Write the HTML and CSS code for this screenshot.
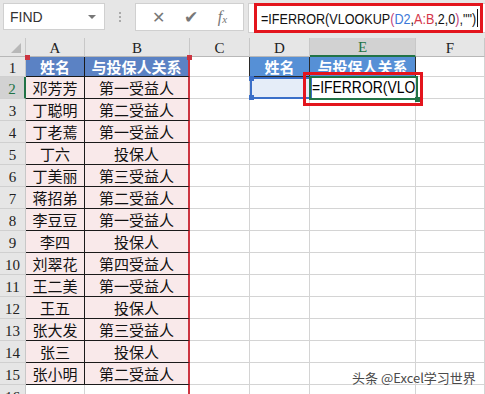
FILE: index.html
```html
<!DOCTYPE html>
<html lang="zh-CN">
<head>
    <meta charset="UTF-8">
    <title>VLOOKUP IFERROR</title>
    <link rel="stylesheet" href="styles.css">
</head>
<body>
    <div class="toolbar">
        <div class="namebox"><span>FIND</span><span class="caret"></span></div>
        <div class="grip"><i></i><i></i><i></i></div>
        <div class="buttons">
            <span class="btn">&#x2715;</span>
            <span class="btn check">&#x2714;</span>
            <span class="btn fx">f<sub>x</sub></span>
        </div>
        <div class="formula">
            <div class="formula-text"><span class="narrow">=IFERROR(VLOOKUP<span class="paren">(</span><span class="ref-d">D2</span>,<span class="ref-a">A:B</span>,2,0<span class="paren">)</span>,"")</span><span class="cursor"></span></div>
        </div>
    </div>

    <div class="sheet">
        <div class="grid">
            <div class="ch corner"><span class="tri"></span></div>
            <div class="ch">A</div><div class="ch">B</div><div class="ch">C</div><div class="ch">D</div><div class="ch active">E</div><div class="ch">F</div>

            <div class="rh">1</div><div class="c th">姓名</div><div class="c th b">与投保人关系</div><div class="c"></div><div class="c th2">姓名</div><div class="c th2">与投保人关系</div><div class="c"></div>
            <div class="rh active">2</div><div class="c t">邓芳芳</div><div class="c t b">第一受益人</div><div class="c"></div><div class="c ref"></div><div class="c edit"><span class="narrow">=IFERROR(VLOOKUP(D2,A:B,2,0),"")</span></div><div class="c"></div>
            <div class="rh">3</div><div class="c t">丁聪明</div><div class="c t b">第二受益人</div><div class="c"></div><div class="c"></div><div class="c"></div><div class="c"></div>
            <div class="rh">4</div><div class="c t">丁老蔫</div><div class="c t b">第一受益人</div><div class="c"></div><div class="c"></div><div class="c"></div><div class="c"></div>
            <div class="rh">5</div><div class="c t">丁六</div><div class="c t b">投保人</div><div class="c"></div><div class="c"></div><div class="c"></div><div class="c"></div>
            <div class="rh">6</div><div class="c t">丁美丽</div><div class="c t b">第三受益人</div><div class="c"></div><div class="c"></div><div class="c"></div><div class="c"></div>
            <div class="rh">7</div><div class="c t">蒋招弟</div><div class="c t b">第二受益人</div><div class="c"></div><div class="c"></div><div class="c"></div><div class="c"></div>
            <div class="rh">8</div><div class="c t">李豆豆</div><div class="c t b">第一受益人</div><div class="c"></div><div class="c"></div><div class="c"></div><div class="c"></div>
            <div class="rh">9</div><div class="c t">李四</div><div class="c t b">投保人</div><div class="c"></div><div class="c"></div><div class="c"></div><div class="c"></div>
            <div class="rh">10</div><div class="c t">刘翠花</div><div class="c t b">第四受益人</div><div class="c"></div><div class="c"></div><div class="c"></div><div class="c"></div>
            <div class="rh">11</div><div class="c t">王二美</div><div class="c t b">第一受益人</div><div class="c"></div><div class="c"></div><div class="c"></div><div class="c"></div>
            <div class="rh">12</div><div class="c t">王五</div><div class="c t b">投保人</div><div class="c"></div><div class="c"></div><div class="c"></div><div class="c"></div>
            <div class="rh">13</div><div class="c t">张大发</div><div class="c t b">第三受益人</div><div class="c"></div><div class="c"></div><div class="c"></div><div class="c"></div>
            <div class="rh">14</div><div class="c t">张三</div><div class="c t b">投保人</div><div class="c"></div><div class="c"></div><div class="c"></div><div class="c"></div>
            <div class="rh">15</div><div class="c t">张小明</div><div class="c t b">第二受益人</div><div class="c"></div><div class="c"></div><div class="c"></div><div class="c"></div>
            <div class="rh">16</div><div class="c"></div><div class="c b-only"></div><div class="c"></div><div class="c"></div><div class="c"></div><div class="c"></div>
        </div>

        <!-- range handles and annotation boxes drawn over the grid -->
        <span class="handle red h-a"></span>
        <span class="handle red h-b"></span>
        <div class="ref-box"><span class="handle blue tl"></span><span class="handle blue bl"></span></div>
        <div class="active-box"><span class="handle green br"></span></div>
        <div class="mark-box"></div>
        <div class="watermark">头条 @Excel学习世界</div>
    </div>
</body>
</html>
```

FILE: styles.css
```css
body {
    margin: 0;
    width: 485px;
    height: 394px;
    overflow: hidden;
    background: #e6e6e6;
    font-family: "Liberation Sans", Arial, sans-serif;
}

/* formula bar */
.toolbar {
    height: 38px;
    display: flex;
    align-items: flex-start;
    padding: 3px 0 0 3px;
    box-sizing: border-box;
}
.namebox {
    width: 102px;
    height: 27px;
    background: #fff;
    border: 1px solid #d0d0d0;
    box-sizing: border-box;
    display: flex;
    align-items: center;
    justify-content: space-between;
    padding: 0 8px 0 6px;
    font-size: 14px;
    color: #333;
}
.caret {
    width: 0;
    height: 0;
    border-left: 4px solid transparent;
    border-right: 4px solid transparent;
    border-top: 4px solid #777;
}
.grip {
    width: 30px;
    height: 27px;
    display: flex;
    flex-direction: column;
    align-items: center;
    justify-content: center;
    gap: 2px;
}
.grip i {
    width: 2px;
    height: 2px;
    background: #aaa;
}
.buttons {
    width: 109px;
    height: 28px;
    background: #fff;
    border: 1px solid #d0d0d0;
    box-sizing: border-box;
    display: flex;
    align-items: center;
    justify-content: space-around;
    padding: 0 6px;
    color: #777;
    font-size: 16px;
}
.btn.check {
    font-size: 17px;
}
.btn.fx {
    font-family: "Liberation Serif", serif;
    font-style: italic;
    font-size: 16px;
}
.btn.fx sub {
    font-size: 11px;
    vertical-align: -1px;
}
.formula {
    margin-left: 4px;
    flex: 1;
    height: 30px;
    background: #fff;
    border: 1px solid #d0d0d0;
    border-right: none;
    box-sizing: border-box;
    padding-left: 5px;
}
.formula-text {
    display: flex;
    align-items: center;
    width: 229px;
    height: 30px;
    margin-top: -1px;
    border: 3px solid #e3151d;
    box-sizing: border-box;
    padding-left: 4px;
    font-size: 15px;
    color: #111;
    white-space: pre;
    overflow: hidden;
}
.narrow {
    display: inline-block;
    transform: scaleX(0.84);
    transform-origin: left center;
}
.formula-text .narrow {
    width: 214px;
    flex: none;
}
.paren { color: #c0407a; }
.ref-d { color: #3b78d8; }
.ref-a { color: #d4364a; }
.cursor {
    flex: none;
    width: 1px;
    height: 18px;
    background: #111;
    margin-left: 2px;
}

/* sheet */
.sheet {
    position: relative;
}
.grid {
    display: grid;
    grid-template-columns: 26px 59px 105px 60px 60px 106px 69px;
    grid-template-rows: 19px 20px repeat(15, 22px);
    background: #fff;
}
.grid > div {
    box-sizing: border-box;
    display: flex;
    align-items: center;
    justify-content: center;
    overflow: hidden;
    white-space: nowrap;
}
.ch {
    background: #e6e6e6;
    border-right: 1px solid #c8c8c8;
    border-bottom: 1px solid #b8b8b8;
    font-family: "Liberation Serif", serif;
    font-size: 15px;
    color: #222;
    padding-top: 2px;
}
.ch.corner {
    position: relative;
}
.tri {
    position: absolute;
    right: 4px;
    bottom: 3px;
    border-left: 10px solid transparent;
    border-bottom: 10px solid #b8b8b8;
}
.ch.active {
    background: #d2d2d2;
    color: #217346;
    border-bottom: 2px solid #217346;
}
.rh {
    background: #e6e6e6;
    border-right: 1px solid #c8c8c8;
    border-bottom: 1px solid #d0d0d0;
    font-family: "Liberation Serif", serif;
    font-size: 15px;
    color: #222;
    padding-top: 3px;
}
.rh.active {
    background: #d2d2d2;
    color: #217346;
    border-right: 2px solid #217346;
}
.c {
    border-right: 1px solid #d4d4d4;
    border-bottom: 1px solid #d4d4d4;
    font-family: "Noto Sans CJK SC", sans-serif;
    font-size: 15px;
    color: #111;
}
.c.t {
    background: #f9e9ea;
    border-right: 1px solid #1a1a1a;
    border-bottom: 1px solid #1a1a1a;
}
.c.th {
    background: #5b82c4;
    color: #fff;
    font-weight: bold;
    border-right: 1px solid #1a1a1a;
    border-bottom: 1px solid #1a1a1a;
}
.c.th2 {
    background: #5690d6;
    color: #fff;
    font-weight: bold;
    border-left: 1px solid #2a2a2a;
    border-right: 1px solid #2a2a2a;
    border-bottom: 1px solid #2a2a2a;
    margin-left: -1px;
}
.c.th2 + .c.th2 {
    margin-left: 0;
    border-left: none;
}
.c.b,
.c.b-only {
    border-right: 2px solid #cc3440;
}
.c.ref {
    background: #e5edf8;
}
.c.edit {
    justify-content: flex-start;
    padding-left: 2px;
    font-family: "Liberation Sans", Arial, sans-serif;
    font-size: 16px;
    color: #000;
}
.c.edit .narrow {
    transform: scaleX(0.87);
}

/* overlays */
.handle {
    position: absolute;
    width: 5px;
    height: 5px;
}
.handle.red { background: #cc3440; }
.handle.blue { background: #3a6fc8; }
.handle.green { background: #217346; }
.h-a { left: 25px; top: 17px; }
.h-b { left: 187px; top: 17px; }
.ref-box {
    position: absolute;
    left: 250px;
    top: 39px;
    width: 62px;
    height: 22px;
    border: 2px solid #3a6fc8;
    box-sizing: border-box;
}
.ref-box .tl { left: -3px; top: -3px; }
.ref-box .bl { left: -3px; bottom: -3px; }
.active-box {
    position: absolute;
    left: 309px;
    top: 38px;
    width: 109px;
    height: 24px;
    border: 2px solid #217346;
    box-sizing: border-box;
}
.active-box .br { right: -4px; bottom: -4px; }
.mark-box {
    position: absolute;
    left: 303px;
    top: 34px;
    width: 120px;
    height: 34px;
    border: 3px solid #e3151d;
    box-sizing: border-box;
}
.watermark {
    position: absolute;
    left: 352px;
    top: 330px;
    font-family: "Noto Sans CJK SC", sans-serif;
    font-size: 13px;
    color: #4a4a4a;
    text-shadow: 0 0 2px #fff, 0 0 2px #fff;
}
```
